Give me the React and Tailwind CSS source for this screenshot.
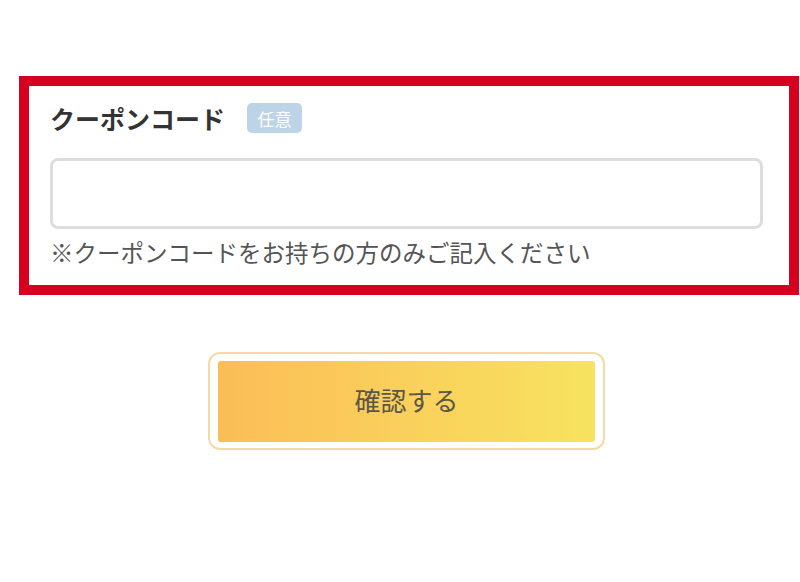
export default function App() {
  return (
    <div
      className="w-[800px] h-[582px] bg-white overflow-hidden"
      style={{ fontFamily: '"Noto Sans CJK JP", "Noto Sans", sans-serif' }}
    >
      <div className="ml-[19px] mt-[76px] w-[780px] border-[10px] border-[#d6001f] bg-white pl-[21px] pr-[26px] pt-[17px] pb-[17px]">
        <div className="flex items-center h-[30px]">
          <span className="text-[25px] font-bold text-[#333333] leading-none">クーポンコード</span>
          <span className="ml-[22px] h-[30px] w-[55px] flex items-center justify-center rounded-[5px] bg-[#bdd3e6] text-white text-[17px] leading-none">
            任意
          </span>
        </div>
        <div className="mt-[25px] h-[71px] w-full rounded-[8px] border-[3px] border-[#dddddd] bg-white"></div>
        <div className="mt-[9px] h-[30px] flex items-center text-[23.5px] text-[#555555] leading-none whitespace-nowrap">
          ※クーポンコードをお持ちの方のみご記入ください
        </div>
      </div>
      <div className="ml-[208px] mt-[57px] w-[397px] h-[98px] rounded-[12px] border-2 border-[#f4dba6] bg-white px-[8px] pt-[7px] pb-[6px]">
        <div className="h-full w-full rounded-[3px] bg-gradient-to-r from-[#fbbd57] to-[#f7e35f] flex items-center justify-center">
          <span className="text-[26px] text-[#5a5748] leading-none pb-[4px]">確認する</span>
        </div>
      </div>
    </div>
  );
}
